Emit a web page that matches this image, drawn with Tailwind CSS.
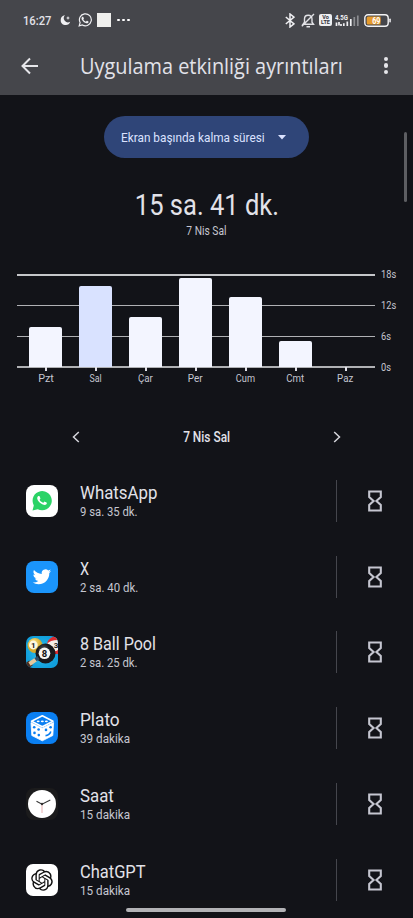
<!DOCTYPE html>
<html lang="tr">
<head>
<meta charset="utf-8">
<title>Uygulama etkinliği ayrıntıları</title>
<script src="https://cdn.jsdelivr.net/npm/@tailwindcss/browser@4"></script>
</head>
<body class="bg-[#121318]">
<svg class="hidden">
  <symbol id="hourglass" viewBox="0 0 14 22"><path d="M1.2 1.5H12.8V7L8.4 11L12.8 15V20.5H1.2V15L5.6 11L1.2 7Z" fill="none" stroke="#c5c6d0" stroke-width="2.1"/></symbol>
  <symbol id="wa" viewBox="0 0 24 24"><path d="M17.472 14.382c-.297-.149-1.758-.867-2.03-.967-.273-.099-.471-.148-.67.15-.197.297-.767.966-.94 1.164-.173.199-.347.223-.644.075-.297-.15-1.255-.463-2.39-1.475-.883-.788-1.48-1.761-1.653-2.059-.173-.297-.018-.458.13-.606.134-.133.298-.347.446-.52.149-.174.198-.298.298-.497.099-.198.05-.371-.025-.52-.075-.149-.669-1.612-.916-2.207-.242-.579-.487-.5-.669-.51-.173-.008-.371-.01-.57-.01-.198 0-.52.074-.792.372-.272.297-1.04 1.016-1.04 2.479 0 1.462 1.065 2.875 1.213 3.074.149.198 2.096 3.2 5.077 4.487.709.306 1.262.489 1.694.625.712.227 1.36.195 1.871.118.571-.085 1.758-.719 2.006-1.413.248-.694.248-1.289.173-1.413-.074-.124-.272-.198-.57-.347"/></symbol>
</svg>
<div class="relative h-[918px] w-[413px] overflow-hidden bg-[#121318] font-['Roboto','Noto_Sans',sans-serif] text-[#e2e2e9] whitespace-nowrap">
  <header class="h-[95px] bg-[#45464b]">
    <div class="flex h-[40px] items-center pl-[23px] pr-[22px]">
      <div class="w-[37px] text-[13.5px] leading-[16px]"><span class="inline-block origin-left scale-x-[0.83] font-medium">16:27</span></div>
      <svg class="h-[12px] w-[11px]" viewBox="0 0 11 12"><path d="M5 1.2A4.9 4.9 0 1 0 10.2 7.7A4.2 4.2 0 0 1 5 1.2Z" fill="#f0f0f3"/><path d="M8 2l.6 1.4 1.4.6-1.4.6L8 6l-.6-1.4L6 4l1.4-.6Z" fill="#f0f0f3"/></svg>
      <svg class="ml-[7px] h-[14px] w-[14px]" viewBox="0 0 24 24"><path d="M2 22l1.6-5.6A10.2 10.2 0 1 1 7.5 20.5Z" fill="none" stroke="#f0f0f3" stroke-width="2"/><use href="#wa" fill="#f0f0f3"/></svg>
      <div class="ml-[5px] h-[14px] w-[14px] bg-[#efefed]"></div>
      <div class="ml-[6px] flex gap-[2.5px]"><i class="size-[2.5px] rounded-full bg-white"></i><i class="size-[2.5px] rounded-full bg-white"></i><i class="size-[2.5px] rounded-full bg-white"></i></div>
      <div class="ml-auto flex items-center">
        <svg class="h-[15px] w-[10px]" viewBox="0 0 10 15" fill="none" stroke="#f0f0f3" stroke-width="1.5"><path d="M.8 4L9 10.8L5 14V1L9 4.2L.8 11"/></svg>
        <svg class="ml-[6px] h-[15px] w-[14px]" viewBox="0 0 14 15" fill="none" stroke="#e2e2e6" stroke-width="1.4"><path d="M2 11.3H12.5L11 9.2V6C11 3.6 9.5 2.3 7.2 2.3S3.5 3.8 3.5 6V9.2ZM5.5 13.8H9M.8 13.2L13 1"/></svg>
        <div class="ml-[4px] flex h-[12px] w-[13px] flex-col items-center justify-center rounded-[2px] bg-[#efeff1] text-[5.5px] font-bold leading-[5px] text-[#34353a]"><span>Vo</span><span>LTE</span></div>
        <div class="ml-[3px] h-[13px] w-[25px]">
          <svg class="h-[13px] w-[25px]" viewBox="0 0 25 13"><text x="0" y="5.5" font-size="6.5" font-weight="700" fill="#f0f0f3" textLength="13" lengthAdjust="spacingAndGlyphs">4.5G</text><path d="M1.5 12V8.5M4 8V11.5M6 12V10M8.8 12V9.2M12.3 12V7.5M15.8 12V5" stroke="#f0f0f3" stroke-width="1.7"/><path d="M19.3 12V3M22.8 12V1.5" stroke="#8c8d91" stroke-width="1.7"/></svg>
        </div>
        <svg class="ml-[4px] h-[13px] w-[27px]" viewBox="0 0 27 13"><rect x=".8" y=".8" width="23.4" height="11.4" rx="3.2" fill="none" stroke="#f3f3f5" stroke-width="1.4"/><rect x="25.3" y="4.5" width="1.5" height="4" rx=".7" fill="#f3f3f5"/><path d="M4 2.5H16.5V10.5H4Q2.7 10.5 2.7 9V4Q2.7 2.5 4 2.5Z" fill="#e59a2c"/><text x="8.2" y="9.7" font-size="8.5" font-weight="700" fill="#fff" textLength="8.3" lengthAdjust="spacingAndGlyphs">69</text></svg>
      </div>
    </div>
    <div class="flex h-[51px] items-center pl-[21px] pr-[25px]">
      <svg class="h-[18px] w-[18px]" viewBox="0 0 18 18" fill="none" stroke="#e6e6ea" stroke-width="2"><path d="M17 9H1.8M9 1.5L1.5 9L9 16.5"/></svg>
      <h1 class="ml-[41px] w-[263px] text-[22px] leading-[30px]"><span class="inline-block origin-left scale-x-[0.904] font-['Open_Sans']">Uygulama etkinliği ayrıntıları</span></h1>
      <div class="ml-auto flex flex-col gap-[2px]"><i class="size-[4.5px] rounded-full bg-[#e6e6ea]"></i><i class="size-[4.5px] rounded-full bg-[#e6e6ea]"></i><i class="size-[4.5px] rounded-full bg-[#e6e6ea]"></i></div>
    </div>
  </header>

  <main>
    <div class="mx-auto mt-[21px] flex h-[42px] w-[205px] items-center rounded-full bg-[#2f4578] pl-[17px]">
      <div class="w-[157px] text-[13.5px] text-[#dbe2ff]"><span class="inline-block origin-left scale-x-[0.875]">Ekran başında kalma süresi</span></div>
      <svg class="h-[5px] w-[8px]" viewBox="0 0 8 5"><path d="M0 0H8L4 4.5Z" fill="#dbe2ff"/></svg>
    </div>
    <div class="mt-[30px] flex h-[34px] items-center justify-center text-[29px] leading-[34px]"><span class="inline-block scale-x-[0.88]">15 sa. 41 dk.</span></div>
    <div class="mt-[1px] flex h-[16px] items-center justify-center text-[13px] leading-[16px] text-[#c5c6d0]"><span class="inline-block scale-x-[0.79]">7 Nis Sal</span></div>

    <section class="mt-[35px] flex h-[112px] pl-[17px]">
      <div class="grid w-[358px]">
        <div class="col-start-1 row-start-1 flex h-[94px] flex-col justify-between">
          <i class="h-[1.5px] bg-[#c5c6c9]"></i><i class="h-[1.5px] bg-[#b0b1b4]"></i><i class="h-[1.5px] bg-[#b0b1b4]"></i><i class="h-[1.5px] bg-[#b0b1b4]"></i>
        </div>
        <div class="z-10 col-start-1 row-start-1 ml-[3.5px] grid w-[350px] grid-cols-7 text-[11px] leading-[13px] text-[#c5c6d0]">
          <div class="flex flex-col items-center"><div class="flex h-[93px] items-end"><div class="h-[40px] w-[33px] rounded-t-[2px] bg-[#f3f5ff]"></div></div><i class="h-[4px] w-[2px] bg-[#e2e2e9]"></i><span class="mt-[1px] scale-x-[0.98]">Pzt</span></div>
          <div class="flex flex-col items-center"><div class="flex h-[93px] items-end"><div class="h-[81px] w-[33px] rounded-t-[2px] bg-[#d9e2ff]"></div></div><i class="h-[4px] w-[2px] bg-[#e2e2e9]"></i><span class="mt-[1px] scale-x-[0.8]">Sal</span></div>
          <div class="flex flex-col items-center"><div class="flex h-[93px] items-end"><div class="h-[50px] w-[33px] rounded-t-[2px] bg-[#f3f5ff]"></div></div><i class="h-[4px] w-[2px] bg-[#e2e2e9]"></i><span class="mt-[1px] scale-x-[0.88]">Çar</span></div>
          <div class="flex flex-col items-center"><div class="flex h-[93px] items-end"><div class="h-[89px] w-[33px] rounded-t-[2px] bg-[#f3f5ff]"></div></div><i class="h-[4px] w-[2px] bg-[#e2e2e9]"></i><span class="mt-[1px] scale-x-[0.9]">Per</span></div>
          <div class="flex flex-col items-center"><div class="flex h-[93px] items-end"><div class="h-[70px] w-[33px] rounded-t-[2px] bg-[#f3f5ff]"></div></div><i class="h-[4px] w-[2px] bg-[#e2e2e9]"></i><span class="mt-[1px] scale-x-[0.84]">Cum</span></div>
          <div class="flex flex-col items-center"><div class="flex h-[93px] items-end"><div class="h-[26px] w-[33px] rounded-t-[2px] bg-[#f3f5ff]"></div></div><i class="h-[4px] w-[2px] bg-[#e2e2e9]"></i><span class="mt-[1px] scale-x-[0.88]">Cmt</span></div>
          <div class="flex flex-col items-center"><div class="h-[93px]"></div><i class="h-[4px] w-[2px] bg-[#e2e2e9]"></i><span class="mt-[1px] scale-x-[0.88]">Paz</span></div>
        </div>
      </div>
      <div class="-mt-[5px] ml-[6px] flex h-[105px] flex-col justify-between text-[11px] leading-[12px] text-[#c5c6d0]">
        <span class="origin-left scale-x-[0.84]">18s</span><span class="origin-left scale-x-[0.84]">12s</span><span class="origin-left scale-x-[0.84]">6s</span><span class="origin-left scale-x-[0.84]">0s</span>
      </div>
    </section>

    <div class="mt-[40px] flex h-[22px] items-center justify-between pl-[72px] pr-[72px]">
      <svg class="h-[12px] w-[8px]" viewBox="0 0 8 12" fill="none" stroke="#d5d5db" stroke-width="1.5"><path d="M6.8 1L1.5 6L6.8 11"/></svg>
      <span class="scale-x-[0.85] text-[14px] font-medium">7 Nis Sal</span>
      <svg class="h-[12px] w-[8px]" viewBox="0 0 8 12" fill="none" stroke="#d5d5db" stroke-width="1.5"><path d="M1.2 1L6.5 6L1.2 11"/></svg>
    </div>

    <ul class="mt-[15px]">
      <li class="flex h-[75.75px] items-center pl-[26px]">
        <svg class="size-[32px]" viewBox="0 0 32 32"><rect width="32" height="32" rx="8" fill="#fff"/><path d="M6.5 25.5L7.8 20.4A9.6 9.6 0 1 1 11.7 24.2Z" fill="#2bd366"/><g transform="translate(6.4 5.9) scale(.8)"><use href="#wa" fill="#fff" width="24" height="24"/></g></svg>
        <div class="ml-[22px] w-[256px]"><div class="h-[22px] text-[18.5px] leading-[22px]"><span class="inline-block origin-left scale-x-[0.91]">WhatsApp</span></div><div class="h-[16px] text-[13px] leading-[16px] text-[#c5c6d0]"><span class="inline-block origin-left scale-x-[0.87]">9 sa. 35 dk.</span></div></div>
        <i class="h-[42px] w-px bg-[#45464d]"></i><svg class="ml-[31px] h-[22px] w-[14px]"><use href="#hourglass"/></svg>
      </li>
      <li class="flex h-[75.75px] items-center pl-[26px]">
        <svg class="size-[32px]" viewBox="0 0 32 32"><rect width="32" height="32" rx="8" fill="#1b95fb"/><path transform="translate(6.7 6.5) scale(.77)" fill="#fff" d="M23.953 4.57a10 10 0 01-2.825.775 4.958 4.958 0 002.163-2.723c-.951.555-2.005.959-3.127 1.184a4.92 4.92 0 00-8.384 4.482C7.69 8.095 4.067 6.13 1.64 3.162a4.822 4.822 0 00-.666 2.475c0 1.71.87 3.213 2.188 4.096a4.904 4.904 0 01-2.228-.616v.06a4.923 4.923 0 003.946 4.827 4.996 4.996 0 01-2.212.085 4.936 4.936 0 004.604 3.417 9.867 9.867 0 01-6.102 2.105c-.39 0-.779-.023-1.17-.067a13.995 13.995 0 007.557 2.209c9.053 0 13.998-7.496 13.998-13.985 0-.21 0-.42-.015-.63A9.935 9.935 0 0024 4.59z"/></svg>
        <div class="ml-[22px] w-[256px]"><div class="h-[22px] text-[18.5px] leading-[22px]"><span class="inline-block origin-left scale-x-[0.78]">X</span></div><div class="h-[16px] text-[13px] leading-[16px] text-[#c5c6d0]"><span class="inline-block origin-left scale-x-[0.88]">2 sa. 40 dk.</span></div></div>
        <i class="h-[42px] w-px bg-[#45464d]"></i><svg class="ml-[31px] h-[22px] w-[14px]"><use href="#hourglass"/></svg>
      </li>
      <li class="flex h-[75.75px] items-center pl-[26px]">
        <svg class="size-[32px]" viewBox="0 0 32 32">
          <defs><clipPath id="tile"><rect width="32" height="32" rx="7"/></clipPath><radialGradient id="blue"><stop stop-color="#35c3ee"/><stop offset="1" stop-color="#119fdc"/></radialGradient><radialGradient id="dark" cx=".4" cy=".3"><stop stop-color="#55585e"/><stop offset=".6" stop-color="#17181c"/></radialGradient><radialGradient id="gold" cx=".4" cy=".3"><stop stop-color="#ffe98a"/><stop offset="1" stop-color="#d3a92c"/></radialGradient></defs>
          <g clip-path="url(#tile)"><rect width="32" height="32" fill="url(#blue)"/><circle cx="9" cy="9.5" r="7.5" fill="url(#gold)"/><circle cx="7.3" cy="9" r="4.4" fill="#fff8df"/><text x="7.3" y="11.8" font-size="8" font-weight="700" text-anchor="middle" fill="#222">1</text><circle cx="29" cy="9" r="7.8" fill="#f4eee8"/><path d="M21 8A7.8 7.8 0 0 1 32 1.5V4Q24 4 21 8Z" fill="#d92b2f"/><path d="M22 13Q28 17 32 14V18H24Z" fill="#d92b2f"/><text x="30" y="12" font-size="8" font-weight="700" text-anchor="middle" fill="#222">3</text><circle cx="19.5" cy="17.5" r="10" fill="url(#dark)"/><circle cx="18.5" cy="17.3" r="5.8" fill="#f6f6f3"/><text x="18.5" y="20.7" font-size="9.5" font-weight="700" text-anchor="middle" fill="#111">8</text><path d="M0 30.5L5 26.8" stroke="#4a2c20" stroke-width="6"/><path d="M3.5 28L10.5 23.2" stroke="#e4c89c" stroke-width="4"/><path d="M9.5 23.8L12.5 21.6" stroke="#2c4e68" stroke-width="3.8"/></g></svg>
        <div class="ml-[22px] w-[256px]"><div class="h-[22px] text-[18.5px] leading-[22px]"><span class="inline-block origin-left scale-x-[0.87]">8 Ball Pool</span></div><div class="h-[16px] text-[13px] leading-[16px] text-[#c5c6d0]"><span class="inline-block origin-left scale-x-[0.87]">2 sa. 25 dk.</span></div></div>
        <i class="h-[42px] w-px bg-[#45464d]"></i><svg class="ml-[31px] h-[22px] w-[14px]"><use href="#hourglass"/></svg>
      </li>
      <li class="flex h-[75.75px] items-center pl-[26px]">
        <svg class="size-[32px]" viewBox="0 0 32 32"><rect width="32" height="32" rx="8" fill="#0a7ff2"/><path d="M16.3 3.8L27 9.2L16.3 14.7L5.5 9.2Z" fill="none" stroke="#fff" stroke-width="1.6" stroke-linejoin="round"/><path d="M5 10.6L16.3 16.2L27.6 10.6L26.8 23.5L16.3 28.8L5.8 23.5Z" fill="#fff" stroke="#fff" stroke-width=".8" stroke-linejoin="round"/><g fill="#fff"><ellipse cx="12.2" cy="9.3" rx="1.5" ry=".9"/><ellipse cx="16.3" cy="9.3" rx="1.5" ry=".9"/><ellipse cx="20.4" cy="9.3" rx="1.5" ry=".9"/></g><g fill="#0a7ff2"><circle cx="8.2" cy="15.3" r="1.3"/><circle cx="12.6" cy="17.5" r="1.3"/><circle cx="8.5" cy="20.9" r="1.3"/><circle cx="12.8" cy="23.1" r="1.3"/><circle cx="20" cy="17.9" r="1.3"/><circle cx="24.6" cy="15.3" r="1.3"/></g><path d="M19.5 23.6Q23.5 23.4 24.8 19.5" fill="none" stroke="#0a7ff2" stroke-width="1.6"/></svg>
        <div class="ml-[22px] w-[256px]"><div class="h-[22px] text-[18.5px] leading-[22px]"><span class="inline-block origin-left scale-x-[0.93]">Plato</span></div><div class="h-[16px] text-[13px] leading-[16px] text-[#c5c6d0]"><span class="inline-block origin-left scale-x-[0.9]">39 dakika</span></div></div>
        <i class="h-[42px] w-px bg-[#45464d]"></i><svg class="ml-[31px] h-[22px] w-[14px]"><use href="#hourglass"/></svg>
      </li>
      <li class="flex h-[75.75px] items-center pl-[26px]">
        <svg class="size-[32px]" viewBox="0 0 32 32"><rect width="32" height="32" rx="8" fill="#1b1b1c"/><circle cx="16" cy="16" r="14" fill="#fff"/><path d="M10.5 13.3L16 16.2L24.3 12" fill="none" stroke="#333" stroke-width="1.1"/><path d="M16 15V25" stroke="#e09a9a" stroke-width=".8"/><circle cx="16" cy="16" r="1.2" fill="#333"/></svg>
        <div class="ml-[22px] w-[256px]"><div class="h-[22px] text-[18.5px] leading-[22px]"><span class="inline-block origin-left scale-x-[0.91]">Saat</span></div><div class="h-[16px] text-[13px] leading-[16px] text-[#c5c6d0]"><span class="inline-block origin-left scale-x-[0.9]">15 dakika</span></div></div>
        <i class="h-[42px] w-px bg-[#45464d]"></i><svg class="ml-[31px] h-[22px] w-[14px]"><use href="#hourglass"/></svg>
      </li>
      <li class="flex h-[75.75px] items-center pl-[26px]">
        <svg class="size-[32px]" viewBox="0 0 32 32"><rect width="32" height="32" rx="7" fill="#fff"/><path transform="translate(5.2 5.2) scale(.9)" fill="#111" d="M22.2819 9.8211a5.9847 5.9847 0 0 0-.5157-4.9108 6.0462 6.0462 0 0 0-6.5098-2.9A6.0651 6.0651 0 0 0 4.9807 4.1818a5.9847 5.9847 0 0 0-3.9977 2.9 6.0462 6.0462 0 0 0 .7427 7.0966 5.98 5.98 0 0 0 .511 4.9107 6.051 6.051 0 0 0 6.5146 2.9001A5.9847 5.9847 0 0 0 13.2599 24a6.0557 6.0557 0 0 0 5.7718-4.2058 5.9894 5.9894 0 0 0 3.9977-2.9001 6.0557 6.0557 0 0 0-.7475-7.0729zm-9.022 12.6081a4.4755 4.4755 0 0 1-2.8764-1.0408l.1419-.0804 4.7783-2.7582a.7948.7948 0 0 0 .3927-.6813v-6.7369l2.02 1.1686a.071.071 0 0 1 .038.052v5.5826a4.504 4.504 0 0 1-4.4945 4.4944zm-9.6607-4.1254a4.4708 4.4708 0 0 1-.5346-3.0137l.142.0852 4.783 2.7582a.7712.7712 0 0 0 .7806 0l5.8428-3.3685v2.3324a.0804.0804 0 0 1-.0332.0615L9.74 19.9502a4.4992 4.4992 0 0 1-6.1408-1.6464zM2.3408 7.8956a4.485 4.485 0 0 1 2.3655-1.9728V11.6a.7664.7664 0 0 0 .3879.6765l5.8144 3.3543-2.0201 1.1685a.0757.0757 0 0 1-.071 0l-4.8303-2.7865A4.504 4.504 0 0 1 2.3408 7.872zm16.5963 3.8558L13.1038 8.364 15.1192 7.2a.0757.0757 0 0 1 .071 0l4.8303 2.7913a4.4944 4.4944 0 0 1-.6765 8.1042v-5.6772a.79.79 0 0 0-.407-.667zm2.0107-3.0231l-.142-.0852-4.7735-2.7818a.7759.7759 0 0 0-.7854 0L9.409 9.2297V6.8974a.0662.0662 0 0 1 .0284-.0615l4.8303-2.7866a4.4992 4.4992 0 0 1 6.6802 4.66zM8.3065 12.863l-2.02-1.1638a.0804.0804 0 0 1-.038-.0567V6.0742a4.4992 4.4992 0 0 1 7.3757-3.4537l-.142.0805L8.704 5.459a.7948.7948 0 0 0-.3927.6813zm1.0976-2.3654l2.602-1.4998 2.6069 1.4998v2.9994l-2.5974 1.4997-2.6067-1.4997Z"/></svg>
        <div class="ml-[22px] w-[256px]"><div class="h-[22px] text-[18.5px] leading-[22px]"><span class="inline-block origin-left scale-x-[0.89]">ChatGPT</span></div><div class="h-[16px] text-[13px] leading-[16px] text-[#c5c6d0]"><span class="inline-block origin-left scale-x-[0.9]">15 dakika</span></div></div>
        <i class="h-[42px] w-px bg-[#45464d]"></i><svg class="ml-[31px] h-[22px] w-[14px]"><use href="#hourglass"/></svg>
      </li>
    </ul>
  </main>
  <div class="absolute right-[6px] top-[132px] h-[70px] w-[3px] rounded-full bg-[#5d5e62]"></div>
  <div class="absolute bottom-[6px] left-[126px] h-[4px] w-[160px] rounded-full bg-[#b3b3b6]"></div>
</div>
</body>
</html>
